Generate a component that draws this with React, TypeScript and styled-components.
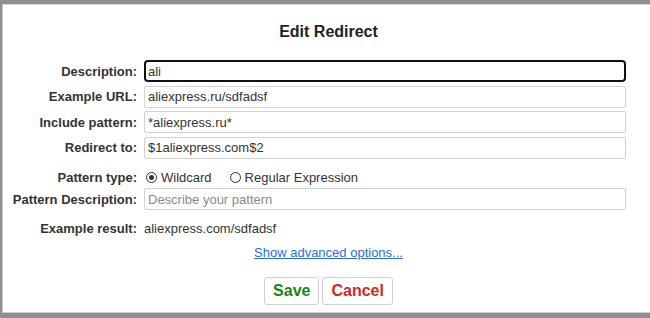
import React from "react";
import styled, { createGlobalStyle } from "styled-components";

const GlobalStyle = createGlobalStyle`
  html, body {
    margin: 0;
    padding: 0;
    overflow: hidden;
  }

  body {
    background: #8f8f8f;
    font-family: "Liberation Sans", Arial, sans-serif;
    font-size: 13px;
    color: #333;
  }
`;

const Overlay = styled.div`
  width: 650px;
  height: 318px;
  padding: 4px 0 0 2px;
  box-sizing: border-box;
  overflow: hidden;
`;

const Dialog = styled.div`
  width: 652px;
  height: 309px;
  box-sizing: border-box;
  background: #fff;
  border-top: 1px solid #d4d4d4;
  border-left: 1px solid #c8c8c8;
  border-bottom: 1px solid #cfcfcf;
  display: flex;
  flex-direction: column;
  align-items: center;
  padding-top: 15px;
`;

const Title = styled.h3`
  margin: 0 0 16px;
  font-size: 16px;
  font-weight: 700;
  color: #222;
  line-height: 24px;
`;

const Form = styled.div`
  align-self: flex-start;
  display: grid;
  grid-template-columns: 123px 482px;
  column-gap: 7px;
  row-gap: 3.67px;
  padding-left: 11px;
`;

const Label = styled.label`
  font-weight: 700;
  text-align: right;
  white-space: nowrap;
  color: #333;
  display: flex;
  align-items: center;
  justify-content: flex-end;
`;

const TextInput = styled.input<{ $focused?: boolean }>`
  height: 22px;
  box-sizing: border-box;
  margin: 0;
  padding: 0 3px;
  font-family: inherit;
  font-size: 13px;
  color: #333;
  background: #fff;
  border: 1px solid #d2d2d2;
  border-radius: 2px;
  outline: none;

  ${(p) =>
    p.$focused &&
    `
    border: 2px solid #111;
    border-radius: 4px;
    padding: 0 2px;
  `}

  &::placeholder {
    color: #8a8a8a;
  }
`;

const RadioRow = styled.div`
  height: 22px;
  display: flex;
  align-items: flex-end;
  padding-bottom: 0;
  box-sizing: border-box;
  gap: 4px;
`;

const RadioLabel = styled.label<{ $last?: boolean }>`
  display: flex;
  align-items: center;
  gap: 4px;
  margin-right: ${(p) => (p.$last ? 0 : 12)}px;
  line-height: 15px;
`;

const RadioCircle = styled.span<{ $checked?: boolean }>`
  width: 11px;
  height: 11px;
  box-sizing: border-box;
  border: 1px solid #333;
  border-radius: 50%;
  display: inline-flex;
  align-items: center;
  justify-content: center;
  margin-left: 2px;

  &::after {
    content: "";
    width: 5px;
    height: 5px;
    border-radius: 50%;
    background: ${(p) => (p.$checked ? "#333" : "transparent")};
  }
`;

const StaticValue = styled.div`
  height: 24px;
  display: flex;
  align-items: flex-end;
  padding-bottom: 2px;
  box-sizing: border-box;
`;

const StaticLabel = styled(Label)`
  align-items: flex-end;
  padding-bottom: 2px;
`;

const PatternLabel = styled(StaticLabel)`
  padding-bottom: 0;
`;

const AdvancedLink = styled.a`
  margin-top: 7px;
  color: #2a6ee0;
  text-decoration: underline;
  line-height: 15px;
  cursor: pointer;
`;

const Buttons = styled.div`
  margin-top: 17px;
  display: flex;
  gap: 3px;
`;

const Button = styled.button<{ $tone: "save" | "cancel" }>`
  height: 28px;
  padding: 0 8px;
  font-family: inherit;
  font-size: 16px;
  font-weight: 700;
  background: #fff;
  border: 1px solid #d0d0d0;
  border-radius: 3px;
  color: ${(p) => (p.$tone === "save" ? "#118a11" : "#d4281c")};
  cursor: pointer;
`;

const App: React.FC = () => {
  return (
    <>
      <GlobalStyle />
      <Overlay>
        <Dialog>
          <Title>Edit Redirect</Title>
          <Form>
            <Label>Description:</Label>
            <TextInput $focused defaultValue="ali" />
            <Label>Example URL:</Label>
            <TextInput defaultValue="aliexpress.ru/sdfadsf" />
            <Label>Include pattern:</Label>
            <TextInput defaultValue="*aliexpress.ru*" />
            <Label>Redirect to:</Label>
            <TextInput defaultValue="$1aliexpress.com$2" />
            <PatternLabel>Pattern type:</PatternLabel>
            <RadioRow>
              <RadioLabel>
                <RadioCircle $checked />
                Wildcard
              </RadioLabel>
              <RadioLabel $last>
                <RadioCircle />
                Regular Expression
              </RadioLabel>
            </RadioRow>
            <Label>Pattern Description:</Label>
            <TextInput placeholder="Describe your pattern" />
            <StaticLabel>Example result:</StaticLabel>
            <StaticValue>aliexpress.com/sdfadsf</StaticValue>
          </Form>
          <AdvancedLink>Show advanced options...</AdvancedLink>
          <Buttons>
            <Button $tone="save">Save</Button>
            <Button $tone="cancel">Cancel</Button>
          </Buttons>
        </Dialog>
      </Overlay>
    </>
  );
};

export default App;
